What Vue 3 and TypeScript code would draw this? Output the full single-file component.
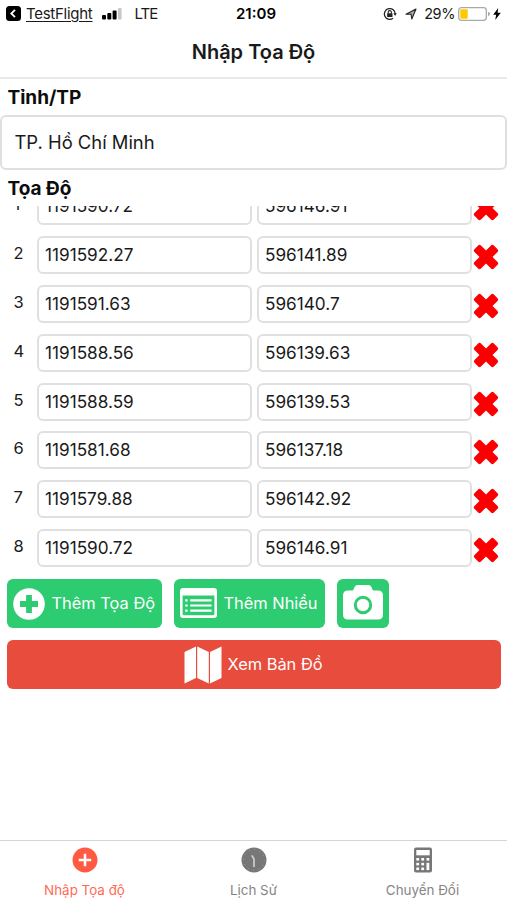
<script setup lang="ts">
interface Point {
  id: number
  x: string
  y: string
}

const points: Point[] = [
  { id: 1, x: '1191590.72', y: '596146.91' },
  { id: 2, x: '1191592.27', y: '596141.89' },
  { id: 3, x: '1191591.63', y: '596140.7' },
  { id: 4, x: '1191588.56', y: '596139.63' },
  { id: 5, x: '1191588.59', y: '596139.53' },
  { id: 6, x: '1191581.68', y: '596137.18' },
  { id: 7, x: '1191579.88', y: '596142.92' },
  { id: 8, x: '1191590.72', y: '596146.91' },
]
</script>

<template>
  <div class="screen">
    <div class="status">
      <div class="status-left">
        <svg class="back" viewBox="0 0 15 15"><rect width="15" height="15" rx="3.5" fill="#000" /><path d="M9 3.8 5.3 7.5 9 11.2" fill="none" stroke="#fff" stroke-width="1.8" /></svg>
        <span class="app-name">TestFlight</span>
        <svg class="signal" viewBox="0 0 20 12"><rect x="0" y="7" width="4" height="4.5" rx="1" /><rect x="5.3" y="5" width="4" height="6.5" rx="1" /><rect x="10.6" y="2.5" width="4" height="9" rx="1" /><rect x="16" y="0" width="3.6" height="11.5" rx="1" fill="#c8c8c8" /></svg>
        <span class="carrier">LTE</span>
      </div>
      <span class="clock">21:09</span>
      <div class="status-right">
        <svg class="lock" viewBox="0 0 14 14" fill="none" stroke="#222" stroke-width="1.3"><path d="M12.2 7A5.4 5.4 0 1 0 10 11.3" /><path d="M10.4 6.2h3.4l-1.7 2.7z" fill="#222" stroke="none" /><rect x="4.1" y="6.3" width="5.4" height="3.8" rx=".5" fill="#222" stroke="none" /><path d="M5.2 6.5V5.2a1.6 1.6 0 0 1 3.2 0v1.3" stroke-width="1.1" /></svg>
        <svg class="location" viewBox="0 0 12 12"><path d="M1 6.2 11 1 6.8 11 6.1 6.2z" fill="#aaa" stroke="#222" stroke-width="1.1" stroke-linejoin="round" /></svg>
        <span class="percent">29%</span>
        <svg class="battery" viewBox="0 0 32 14"><rect x=".7" y=".7" width="27.6" height="12.6" rx="2.7" fill="#fff" stroke="#aaa" stroke-width="1.3" /><rect x="2.3" y="2.3" width="7.4" height="9.4" rx="1" fill="#ffc900" /><path d="M30 4.8q2 .6 2 2.2t-2 2.2z" fill="#aaa" /></svg>
        <svg class="bolt" viewBox="0 0 8 12"><path d="M5.2 0 .2 6.8h3L2.2 12 7.8 4.8H4.6z" /></svg>
      </div>
    </div>
    <header class="title">Nhập Tọa Độ</header>

    <main class="content">
      <h2 class="label">Tỉnh/TP</h2>
      <div class="select">TP. Hồ Chí Minh</div>
      <h2 class="label label-points">Tọa Độ</h2>
      <div class="list">
        <div v-for="p in points" :key="p.id" class="row">
          <span class="index">{{ p.id }}</span>
          <div class="field">{{ p.x }}</div>
          <div class="field">{{ p.y }}</div>
          <svg class="remove" viewBox="-13 -13 26 26" fill="#fb0000"><rect x="-13.7" y="-4.6" width="27.4" height="9.2" rx="2" transform="rotate(45)" /><rect x="-13.7" y="-4.6" width="27.4" height="9.2" rx="2" transform="rotate(-45)" /></svg>
        </div>
      </div>

      <div class="actions">
        <button class="btn add">
          <svg class="ic-plus" viewBox="0 0 32 32"><circle cx="16" cy="16" r="15.8" fill="#fff" /><path d="M16 7v18M7 16h18" stroke="#2ecc71" stroke-width="5.8" /></svg>
          <span>Thêm Tọa Độ</span>
        </button>
        <button class="btn many">
          <svg class="ic-list" viewBox="0 0 37 30"><path fill="#fff" fill-rule="evenodd" d="M3.2 0h30.6Q37 0 37 3.2v23.6q0 3.2-3.2 3.2H3.2Q0 30 0 26.8V3.2Q0 0 3.2 0zM2.6 7.5v18.2q0 1.6 1.6 1.6h28.6q1.6 0 1.6-1.6V7.5z" /><path d="M5.2 12.3h2.4M5.2 17.5h2.4M5.2 22.7h2.4M10.2 12.3h21.4M10.2 17.5h21.4M10.2 22.7h21.4" stroke="#fff" stroke-width="2.2" /></svg>
          <span>Thêm Nhiều</span>
        </button>
        <button class="btn cam">
          <svg class="ic-cam" viewBox="0 0 40 35"><path d="M5 5.5h5l1.600-3.600Q12.500 0 14.500 0h11q2 0 2.900 1.900l1.600 3.600h5q5 0 5 5v19q0 5-5 5H5q-5 0-5-5v-19q0-5 5-5z" fill="#fff" /><circle cx="20" cy="20" r="7.7" fill="none" stroke="#2ecc71" stroke-width="3" /></svg>
        </button>
      </div>
      <button class="btn map">
        <svg class="ic-map" viewBox="0 0 38 38"><path d="M.5 6 12 .5V32L.5 37.5zM13.2 .5l11.600 5.500v31.500L13.200 32zM26 6 37.500 .5V32L26 37.500z" fill="#fff" /></svg>
        <span>Xem Bản Đồ</span>
      </button>
    </main>

    <nav class="tabs">
      <div class="tab active">
        <svg viewBox="0 0 26 26"><circle cx="13" cy="13" r="12.5" fill="#ff5b42" /><path d="M13 6.8v12.4M6.800 13h12.400" stroke="#fff" stroke-width="2.5" /></svg>
        <span>Nhập Tọa độ</span>
      </div>
      <div class="tab">
        <svg viewBox="0 0 26 26"><circle cx="13" cy="13" r="12.5" fill="#777" /><circle cx="13" cy="13" r="10.4" fill="none" stroke="#a2a2a2" stroke-width="1" stroke-dasharray="1 4.445" /><path d="M10.8 8.300 13 12V20" fill="none" stroke="#d4d4d4" stroke-width="1.6" /></svg>
        <span>Lịch Sử</span>
      </div>
      <div class="tab">
        <svg viewBox="0 0 26 26"><rect x="4" y=".5" width="18" height="25" rx="2" fill="#777" /><g fill="#fff"><rect x="6.3" y="3" width="13.4" height="5.3" /><rect x="6.3" y="11" width="2.8" height="2.6" /><rect x="11.3" y="11" width="2.8" height="2.6" /><rect x="16.5" y="11" width="2.8" height="2.6" /><rect x="6.3" y="15.8" width="2.8" height="2.6" /><rect x="11.3" y="15.8" width="2.8" height="2.6" /><rect x="6.3" y="20.5" width="2.8" height="2.6" /><rect x="11.3" y="20.5" width="2.8" height="2.6" /><rect x="16.5" y="15.8" width="2.8" height="7.3" /></g></svg>
        <span>Chuyển Đổi</span>
      </div>
    </nav>
  </div>
</template>

<style>
body {
  margin: 0;
  background: #fff;
}
</style>

<style scoped>
.screen {
  width: 507px;
  height: 900px;
  display: flex;
  flex-direction: column;
  overflow: hidden;
  background: #fff;
  color: #1a1a1a;
  font-family: Inter, Roboto, "Liberation Sans", sans-serif;
  white-space: nowrap;
}
.screen * {
  box-sizing: border-box;
}
svg {
  display: block;
  flex: none;
}
.status {
  height: 27px;
  display: grid;
  grid-template-columns: 1fr auto 1fr;
  align-items: center;
  padding: 0 6px 0 6px;
  font-size: 15px;
}
.status-left,
.status-right {
  display: flex;
  align-items: center;
}
.status-right {
  justify-content: flex-end;
}
.back {
  width: 15px;
  height: 15px;
  margin-right: 5px;
}
.app-name {
  text-decoration: underline;
  text-underline-offset: 2px;
  letter-spacing: -0.27px;
}
.signal {
  width: 20px;
  height: 12px;
  margin: 0 12px 0 10px;
}
.carrier {
  letter-spacing: -1px;
}
.clock {
  margin-left: 5px;
  font-weight: 600;
  font-size: 15px;
  color: #000;
}
.lock {
  width: 14px;
  height: 14px;
  margin-right: 8px;
}
.location {
  width: 12px;
  height: 12px;
  margin-right: 7px;
}
.percent {
  font-size: 14.5px;
  letter-spacing: -0.4px;
  margin-right: 3px;
}
.battery {
  width: 32px;
  height: 14px;
  margin-right: 3px;
}
.bolt {
  width: 8px;
  height: 12px;
}
.title {
  height: 52px;
  border-bottom: 2px solid #e9e9e9;
  text-align: center;
  font-size: 20px;
  line-height: 50px;
  font-weight: 600;
}
.content {
  flex: 1;
  min-height: 0;
}
.label {
  margin: 0;
  padding-left: 7.5px;
  height: 36px;
  font-size: 19px;
  line-height: 37px;
  font-weight: 700;
  color: #0c0c0c;
}
.select {
  height: 55px;
  border: 2px solid #dfdfdf;
  border-radius: 6px;
  padding-left: 12.5px;
  font-size: 18.4px;
  line-height: 51px;
}
.label-points {
  height: 36px;
  line-height: 37px;
}
.list {
  height: 366px;
  overflow: hidden;
  display: flex;
  flex-direction: column;
  justify-content: flex-end;
  gap: 10.83px;
  padding-bottom: 5px;
}
.row {
  height: 38px;
  flex: none;
  display: grid;
  grid-template-columns: 37px 215px 215px 26px;
}
.index {
  padding-left: 13.5px;
  font-size: 16.5px;
  line-height: 35px;
}
.field {
  width: 215px;
  border: 2px solid #e0e0e0;
  border-radius: 6px;
  padding-left: 6px;
  font-size: 17.2px;
  line-height: 33px;
}
.row .field:nth-child(3) {
  margin-left: 5px;
}
.remove {
  width: 26px;
  height: 26px;
  margin: 8px 0 0 6px;
}
.actions {
  display: flex;
  gap: 12px;
  padding: 7px 7px 12px;
}
.btn {
  height: 49px;
  margin: 0;
  border: 0;
  border-radius: 6px;
  padding: 0 6px;
  display: flex;
  align-items: center;
  background: #2ecc71;
  color: #fff;
  font-family: inherit;
  font-size: 16.4px;
}
.btn span {
  margin-top: -2px;
}
.add {
  width: 155px;
}
.many {
  width: 151px;
}
.cam {
  width: 52px;
}
.map {
  width: 494px;
  margin-left: 7px;
  background: #e74c3c;
  justify-content: center;
}
.ic-plus {
  width: 32px;
  height: 32px;
  margin-right: 6.5px;
}
.ic-list {
  width: 37px;
  height: 30px;
  margin: -2px 6.5px 0 0;
}
.ic-cam {
  width: 40px;
  height: 35px;
  margin-top: -2px;
}
.ic-map {
  width: 38px;
  height: 38px;
  margin: 1px 5px 0 -1px;
}
.tabs {
  height: 60px;
  border-top: 1px solid #d5d5d5;
  display: grid;
  grid-template-columns: repeat(3, 1fr);
}
.tab {
  display: flex;
  flex-direction: column;
  align-items: center;
  padding-top: 6px;
  font-size: 13.4px;
  line-height: 18px;
  color: #858585;
}
.tab svg {
  width: 26px;
  height: 26px;
  margin-bottom: 8px;
}
.active {
  color: #ff6a55;
}
</style>
